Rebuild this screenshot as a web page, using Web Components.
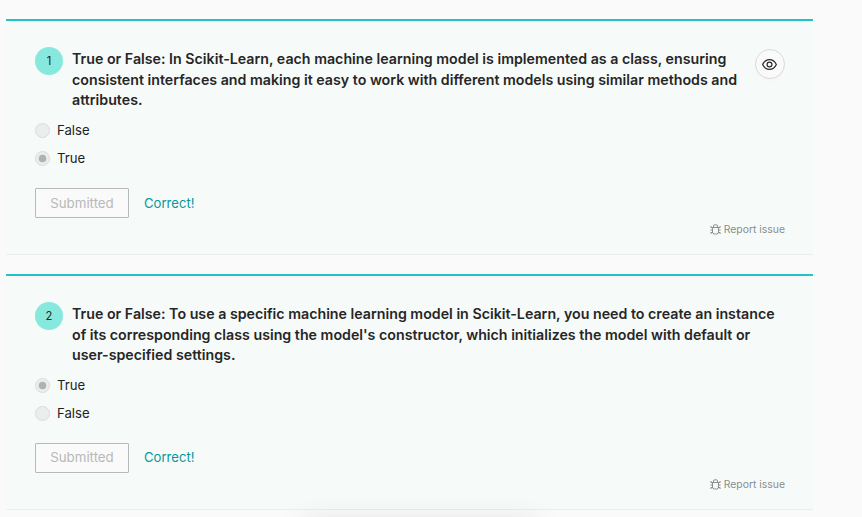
<!DOCTYPE html>
<html lang="en">
<head>
<meta charset="utf-8">
<title>Quiz</title>
<style>
html,body{margin:0;height:100%;overflow:hidden;background:#fafafa}
body{font-family:Inter,"Liberation Sans",sans-serif;color:#262626}
</style>
</head>
<body>
<quiz-page>
  <quiz-card number="1" reveal>
    <span slot="title">True or False: In Scikit-Learn, each machine learning model is implemented as a class, ensuring<br>consistent interfaces and making it easy to work with different models using similar methods and<br>attributes.</span>
    <quiz-option>False</quiz-option>
    <quiz-option checked>True</quiz-option>
  </quiz-card>
  <quiz-card number="2">
    <span slot="title">True or False: To use a specific machine learning model in Scikit-Learn, you need to create an instance<br>of its corresponding class using the model's constructor, which initializes the model with default or<br>user-specified settings.</span>
    <quiz-option checked>True</quiz-option>
    <quiz-option>False</quiz-option>
  </quiz-card>
</quiz-page>
<script>
const define = (name, html, setup) => customElements.define(name, class extends HTMLElement {
  constructor() {
    super();
    this.attachShadow({ mode: 'open' }).innerHTML = html;
  }
  connectedCallback() { if (setup) setup(this, this.shadowRoot); }
});

define('quiz-page', `
<style>
:host{display:flex;flex-direction:column;gap:19px;box-sizing:border-box;height:517px;padding:19px 49px 0 6px;position:relative;overflow:hidden}
.shade{position:absolute;left:304px;top:524px;width:232px;height:20px;box-shadow:0 0 28px 2px rgba(0,0,0,.11)}
</style>
<slot></slot><div class="shade"></div>`);

define('number-badge', `
<style>
:host{display:flex;flex:none;align-items:center;justify-content:center;box-sizing:border-box;width:28px;height:28px;padding-top:1px;border-radius:50%;background:#87e8de;font-size:11.200px;line-height:27px}
</style><slot></slot>`);

define('eye-button', `
<style>
:host{display:flex;flex:none;align-items:center;justify-content:center;box-sizing:border-box;width:30px;height:30px;border:1px solid #d9d9d9;border-radius:50%;background:#fafafa;box-shadow:0 2px 0 rgba(0,0,0,.015)}
svg{display:block;margin-right:1px}
</style>
<svg width="15" height="15" viewBox="0 0 16 16" fill="none" stroke="#2b2b2b" stroke-width="1.300"><path d="M.7 8C2.400 4.400 4.800 2.700 8 2.700S13.600 4.400 15.300 8C13.600 11.600 11.200 13.300 8 13.300S2.400 11.600.7 8Z"/><circle cx="8" cy="8" r="2.600"/></svg>`);

define('quiz-option', `
<style>
:host{display:flex;align-items:center;gap:7px;height:28px;font-size:13.200px;line-height:28px;color:#1f1f1f}
svg{display:block;flex:none}
.dot{display:none}
:host([checked]) .dot{display:inline}
</style><svg width="15" height="15" viewBox="0 0 15 15"><circle cx="7.500" cy="7.500" r="7" fill="#ebeeed" stroke="#d9dcdb"/><circle class="dot" cx="7.500" cy="7.500" r="3.800" fill="#b0b3b2"/></svg><span><slot></slot></span>`);

define('submit-button', `
<style>
:host{display:flex;align-items:center;justify-content:center;box-sizing:border-box;width:94px;height:30px;border:1px solid #b8b8b8;border-radius:1px;background:#fafafa;color:#b8b8b8;font-size:13.300px}
</style><slot></slot>`);

define('report-link', `
<style>
:host{display:flex;align-items:center;justify-content:flex-end;gap:3px;height:16px;font-size:10.400px;line-height:16px;color:#8a8d8c}
svg{display:block}
span{margin-top:1px}
</style>
<svg width="11" height="11" viewBox="0 0 11 11" fill="none" stroke="#7f8281" stroke-width=".9"><path d="M2.500 3.500h6v4.500a2 2 0 0 1-2 2h-2a2 2 0 0 1-2-2ZM3.500 3.500V2a1.200 1.200 0 0 1 1.200-1.200h1.600A1.200 1.200 0 0 1 7.500 2v1.500M2.500 3.500H.9V2M8.500 3.500h1.600V2M2.500 6H.4M8.500 6h2.100M2.500 8.500H.9V10M8.500 8.500h1.600V10"/></svg><span><slot></slot></span>`);

define('quiz-card', `
<style>
:host{display:flex;flex-direction:column;flex:none;box-sizing:border-box;height:236px;padding:26px 28px 0 29px;background:#f6fbfa;border-top:2px solid #20c4c4;border-bottom:1px solid #ebeeee}
.head{display:flex;align-items:flex-start;height:69px}
.title{flex:1;margin:2px 0 0 9px;font-size:14.220px;font-weight:600;line-height:20.500px;white-space:nowrap;color:#262626}
eye-button{margin-top:2px}
.actions{display:flex;align-items:center;gap:15px;margin-top:16px;height:30px}
.result{font-size:13.100px;color:#08979c}
:host([number="2"]) .result{margin-bottom:2px}
:host([number="2"]) submit-button{padding-bottom:2px}
report-link{margin-top:3px}
</style>
<div class="head"><number-badge></number-badge><div class="title"><slot name="title"></slot></div></div>
<slot></slot>
<div class="actions"><submit-button>Submitted</submit-button><span class="result">Correct!</span></div>
<report-link>Report issue</report-link>`, (host, root) => {
  root.querySelector('number-badge').textContent = host.getAttribute('number');
  if (host.hasAttribute('reveal') && !root.querySelector('eye-button'))
    root.querySelector('.head').append(document.createElement('eye-button'));
});
</script>
</body>
</html>
